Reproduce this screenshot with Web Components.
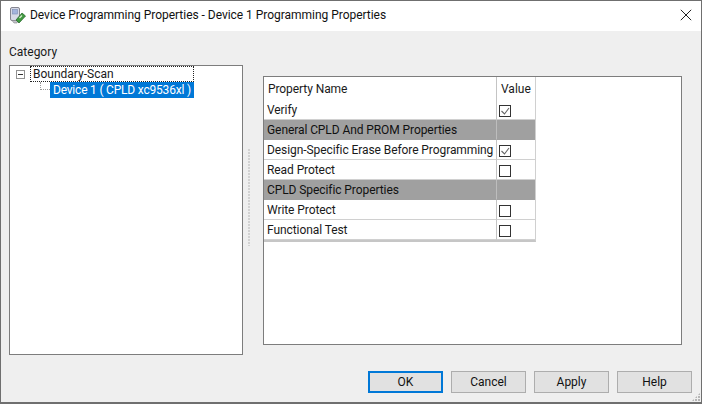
<!DOCTYPE html>
<html><head><meta charset="utf-8"><style>
html,body{margin:0;padding:0;background:#fff;height:100%;overflow:hidden}
body{font:12px Roboto,"Noto Sans",sans-serif;color:#1a1a1a}
</style></head><body>
<prop-dialog>
  <span slot="title">Device Programming Properties - Device 1 Programming Properties</span>
  <tree-panel slot="left"></tree-panel>
  <prop-table slot="right">
    <prop-row type="head" name="Property Name" value="Value"></prop-row>
    <prop-row name="Verify" check="on"></prop-row>
    <prop-row type="group" name="General CPLD And PROM Properties"></prop-row>
    <prop-row name="Design-Specific Erase Before Programming" check="on"></prop-row>
    <prop-row name="Read Protect" check="off"></prop-row>
    <prop-row type="group" name="CPLD Specific Properties"></prop-row>
    <prop-row name="Write Protect" check="off"></prop-row>
    <prop-row name="Functional Test" check="off"></prop-row>
  </prop-table>
  <win-button slot="buttons" primary>OK</win-button>
  <win-button slot="buttons">Cancel</win-button>
  <win-button slot="buttons">Apply</win-button>
  <win-button slot="buttons">Help</win-button>
</prop-dialog>
<script>
class PropDialog extends HTMLElement{constructor(){super();this.attachShadow({mode:'open'}).innerHTML=`<style>
:host{display:flex;flex-direction:column;box-sizing:border-box;width:702px;height:404px;background:#efefef;border:1px solid #6f6f6f;border-bottom-width:2px;position:relative}
.title{display:flex;align-items:center;box-sizing:border-box;height:30px;background:#fff;flex:none;padding:0 0 2px 8px;font-size:12px;color:#111}
.title svg.app{width:18px;height:18px;margin-right:3px;flex:none}
.title .t{flex:1;white-space:nowrap;letter-spacing:-.03px}
.x{width:12px;height:12px;margin-right:9px;flex:none}
.body{flex:1;display:flex;padding:0 19px 0 8px;min-height:0}
.left{width:234px;flex:none;display:flex;flex-direction:column}
.cat{height:34px;line-height:14px;padding-top:14px;box-sizing:border-box;font-size:12px}
.left ::slotted(*){height:290px}
.split{width:20px;flex:none;position:relative}
.split i{position:absolute;left:5px;top:118px;height:97px;width:2px;background:repeating-linear-gradient(#d2d2d2 0 2px,transparent 2px 3px)}
.right{flex:1;padding-top:45px;height:269px}
.btns{display:flex;gap:8px;justify-content:flex-end;padding:0 9px 9px 0;flex:none}
.grip{position:absolute;right:1px;bottom:1px;width:8px;height:8px;background:radial-gradient(circle at 1px 1px,#b5b5b5 1px,transparent 1.1px) 0 0/3px 3px;clip-path:polygon(100% 0,100% 100%,0 100%)}
</style>
<div class="title"><svg class="app" viewBox="0 0 18 18">
<rect x="1.5" y="1.5" width="9" height="13" rx="1.5" fill="#d6d9e6" stroke="#85858f"/>
<rect x="3.5" y="3.5" width="5" height="4.5" fill="#a3b4dc" stroke="#7b8db2" stroke-width=".6"/>
<path d="M3 14.5l2 2.5h3l1-2.5z" fill="#c4c4ca" stroke="#85858c" stroke-width=".6"/>
<path d="M7 14l6-7 3.5 3-6.5 7z" fill="#3f9a3f" stroke="#2b6a30" stroke-width=".8"/>
<path d="M10.5 12l2.5-2.5" stroke="#d8ecd0" stroke-width="1.2"/>
</svg><span class="t"><slot name="title"></slot></span>
<svg class="x" viewBox="0 0 12 12"><path d="M.8.8l10.4 10.4M11.2.8.8 11.2" stroke="#222" stroke-width="1" fill="none"/></svg></div>
<div class="body"><div class="left"><div class="cat">Category</div><slot name="left"></slot></div>
<div class="split"><i></i></div>
<div class="right"><slot name="right"></slot></div></div>
<div class="btns"><slot name="buttons"></slot></div><div class="grip"></div>`}}
class TreePanel extends HTMLElement{constructor(){super();this.attachShadow({mode:'open'}).innerHTML=`<style>
:host{display:block;box-sizing:border-box;background:#fff;border:1px solid #7d7d7d}
.r{display:flex;align-items:center;height:16px;font-size:12px;white-space:nowrap}
.pm{width:9px;height:9px;box-sizing:border-box;border:1px solid #919191;margin-left:6px;position:relative;flex:none}
.pm:after{content:"";position:absolute;left:1px;right:1px;top:3px;height:1px;background:#333}
.lbl{border:1px dotted #222;margin-left:5px;height:16px;box-sizing:border-box;width:164px;line-height:14px;padding-left:2px}
.sel{background:#0078d7;color:#fff;height:16px;line-height:16px;width:144px;padding-left:3px;box-sizing:border-box;letter-spacing:-.2px}
.dots{width:10px;margin-left:30px;height:8px;border-left:1px dotted #999;border-bottom:1px dotted #999;box-sizing:border-box;align-self:flex-start;flex:none}
</style>
<div class="r"><span class="pm"></span><span class="lbl">Boundary-Scan</span></div>
<div class="r"><span class="dots"></span><span class="sel">Device 1 ( CPLD xc9536xl )</span></div>`}}
class PropTable extends HTMLElement{constructor(){super();this.attachShadow({mode:'open'}).innerHTML=`<style>
:host{display:block;box-sizing:border-box;height:269px;background:#fff;border:1px solid #7d7d7d}
.tb{width:271px;border-bottom:2px solid #c6c6c6;border-right:1px solid #d0d0d0}
</style><div class="tb"><slot></slot></div>`}}
class PropRow extends HTMLElement{constructor(){super();const c=this.getAttribute('check');
const box=c?`<span class="cb">${c==='on'?'<svg viewBox="0 0 12 12" width="12" height="12"><path d="M2.5 6l3 3 4.5-6" fill="none" stroke="#666" stroke-width="1.1"/></svg>':''}</span>`:(this.getAttribute('value')||'');
this.attachShadow({mode:'open'}).innerHTML=`<style>
:host{display:grid;grid-template-columns:233px 38px;height:20px;font-size:12px;color:#1a1a1a;white-space:nowrap}
:host([type=head]){height:23px}
:host([type=group]){background:#a0a0a0}
.n{padding-left:3px;line-height:20px;box-sizing:border-box;border-bottom:1px solid #d0d0d0;border-right:1px solid #c4c4c4;overflow:hidden;letter-spacing:-.08px}
.v{line-height:20px;box-sizing:border-box;border-bottom:1px solid #d0d0d0;padding:3px 0 0 2px;display:flex;align-items:center}
:host([type=head]) .n{padding-left:4px;line-height:24px;border-bottom:0}
:host([type=head]) .v{padding:1px 0 0 4px;border-bottom:0}
:host([type=group]) .n{color:#111;border-right-color:#bdbdbd;border-bottom-color:#a0a0a0}
:host([type=group]) .v{border-bottom-color:#a0a0a0}
.cb{width:12px;height:12px;box-sizing:border-box;border:1px solid #333;display:block;position:relative}
.cb svg{position:absolute;left:-1px;top:-1px}
</style><div class="n">${this.getAttribute('name')}</div><div class="v">${box}</div>`}}
class WinButton extends HTMLElement{constructor(){super();this.attachShadow({mode:'open'}).innerHTML=`<style>
:host{display:flex;align-items:center;justify-content:center;box-sizing:border-box;width:75px;height:22px;background:#e1e1e1;border:1px solid #adadad;font-size:12px;color:#111}
:host([primary]){border:2px solid #0078d7}
</style><slot></slot>`}}
customElements.define('prop-dialog',PropDialog);customElements.define('tree-panel',TreePanel);customElements.define('prop-table',PropTable);customElements.define('prop-row',PropRow);customElements.define('win-button',WinButton);
</script></body></html>
